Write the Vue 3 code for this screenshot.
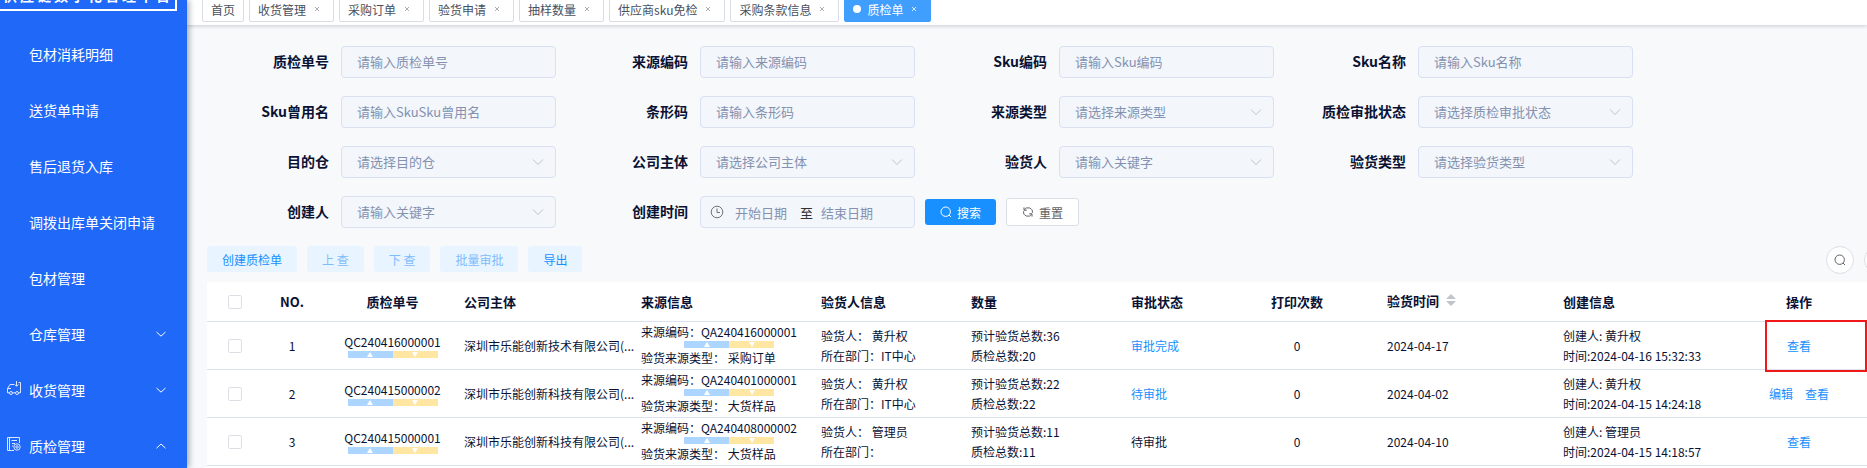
<script setup>
const menu = [
  { text: '包材消耗明细' },
  { text: '送货单申请' },
  { text: '售后退货入库' },
  { text: '调拨出库单关闭申请' },
  { text: '包材管理' },
  { text: '仓库管理', arrow: 'down' },
  { text: '收货管理', arrow: 'down', icon: 'truck' },
  { text: '质检管理', arrow: 'up', icon: 'doc' }
]

const tabs = [
  { text: '首页', fixed: true },
  { text: '收货管理' },
  { text: '采购订单' },
  { text: '验货申请' },
  { text: '抽样数量' },
  { text: '供应商sku免检' },
  { text: '采购条款信息' },
  { text: '质检单', active: true }
]

const fields = [
  { id: 'qcNo', label: '质检单号', hint: '请输入质检单号' },
  { id: 'srcNo', label: '来源编码', hint: '请输入来源编码' },
  { id: 'sku', label: 'Sku编码', hint: '请输入Sku编码' },
  { id: 'skuName', label: 'Sku名称', hint: '请输入Sku名称' },
  { id: 'skuAlias', label: 'Sku曾用名', hint: '请输入SkuSku曾用名' },
  { id: 'barcode', label: '条形码', hint: '请输入条形码' },
  { id: 'srcType', label: '来源类型', hint: '请选择来源类型', select: true },
  { id: 'auditState', label: '质检审批状态', hint: '请选择质检审批状态', select: true },
  { id: 'warehouse', label: '目的仓', hint: '请选择目的仓', select: true },
  { id: 'company', label: '公司主体', hint: '请选择公司主体', select: true },
  { id: 'inspector', label: '验货人', hint: '请输入关键字', select: true },
  { id: 'inspectType', label: '验货类型', hint: '请选择验货类型', select: true },
  { id: 'creator', label: '创建人', hint: '请输入关键字', select: true }
]

const actions = [
  { text: '创建质检单' },
  { text: '上 查', disabled: true },
  { text: '下 查', disabled: true },
  { text: '批量审批', disabled: true },
  { text: '导出' }
]

const rows = [
  {
    no: 1, qc: 'QC240416000001', company: '深圳市乐能创新技术有限公司(...',
    src: 'QA240416000001', srcType: '采购订单', person: '黄升权', dept: 'IT中心',
    plan: 36, total: 20, state: '审批完成', link: true, prints: 0, date: '2024-04-17',
    creator: '黄升权', time: '2024-04-16 15:32:33', ops: ['查看'], marked: true
  },
  {
    no: 2, qc: 'QC240415000002', company: '深圳市乐能创新科技有限公司(...',
    src: 'QA240401000001', srcType: '大货样品', person: '黄升权', dept: 'IT中心',
    plan: 22, total: 22, state: '待审批', link: true, prints: 0, date: '2024-04-02',
    creator: '黄升权', time: '2024-04-15 14:24:18', ops: ['编辑', '查看']
  },
  {
    no: 3, qc: 'QC240415000001', company: '深圳市乐能创新科技有限公司(...',
    src: 'QA240408000002', srcType: '大货样品', person: '管理员', dept: '',
    plan: 11, total: 11, state: '待审批', link: false, prints: 0, date: '2024-04-10',
    creator: '管理员', time: '2024-04-15 14:18:57', ops: ['查看']
  }
]
</script>

<template>
  <div class="page">
    <aside class="side">
      <div class="brand"><div class="brand-box">供应链数字化管理平台</div></div>
      <nav>
        <a v-for="m in menu" :key="m.text" href="#" class="item">
          <span class="item-icon">
            <svg v-if="m.icon === 'truck'" width="16" height="16" viewBox="0 0 16 16">
              <path d="M3.4 12.8H1.5V8.5L4 4.5H8M14.5 5V12.8H12.6M6.6 12.8H9.4M1.5 8.5H5M10.5 1V6M8.6 4.4L10.5 6.3L12.4 4.4M12.5 2.5H14.5V5" />
              <circle cx="5" cy="13" r="1.5" /><circle cx="11" cy="13" r="1.5" />
            </svg>
            <svg v-else-if="m.icon === 'doc'" width="16" height="16" viewBox="0 0 16 16">
              <path d="M8 14.5H1.5V1.5H13.5V7M3.5 1.5V14.5M5.5 4.5H11M6 7.5H9M6 10H7" />
              <circle cx="11" cy="11" r="3.2" /><circle cx="11" cy="11" r="1.2" />
            </svg>
          </span>
          <span class="item-text">{{ m.text }}</span>
          <svg v-if="m.arrow" class="item-arrow" width="12" height="12" viewBox="0 0 12 12">
            <path :d="m.arrow === 'down' ? 'M1.5 4L6 8.2L10.5 4' : 'M1.5 8.2L6 4L10.5 8.2'" />
          </svg>
        </a>
      </nav>
    </aside>

    <main class="main">
      <div class="tabs">
        <a v-for="t in tabs" :key="t.text" href="#" class="tab" :class="{ active: t.active }">
          <i v-if="t.active" class="dot"></i>
          <span>{{ t.text }}</span>
          <svg v-if="!t.fixed" class="close" width="12" height="12" viewBox="0 0 12 12">
            <path d="M4 4L8 8M8 4L4 8" />
          </svg>
        </a>
      </div>

      <form class="filters" @submit.prevent>
        <div v-for="f in fields" :key="f.id" class="field">
          <label :for="f.id">{{ f.label }}</label>
          <div class="control">
            <template v-if="f.select">
              <select :id="f.id"><option>{{ f.hint }}</option></select>
              <svg class="caret" width="12" height="12" viewBox="0 0 12 12"><path d="M1 3.5L6 8.5L11 3.5" /></svg>
            </template>
            <input v-else :id="f.id" type="text" :placeholder="f.hint" />
          </div>
        </div>
        <div class="field">
          <label for="dateFrom">创建时间</label>
          <div class="control range">
            <svg class="clock" width="14" height="14" viewBox="0 0 14 14">
              <circle cx="7" cy="7" r="5.8" /><path d="M7 3.5V7.5H10" />
            </svg>
            <input id="dateFrom" type="text" placeholder="开始日期" />
            <span>至</span>
            <input id="dateTo" type="text" placeholder="结束日期" aria-label="结束日期" />
          </div>
        </div>
        <div class="submit">
          <button type="submit" class="btn primary">
            <svg width="12" height="12" viewBox="0 0 12 12"><circle cx="5.7" cy="5.7" r="4.7" /><path d="M9 9L11 11" /></svg>
            搜索
          </button>
          <button type="reset" class="btn plain">
            <svg width="12" height="12" viewBox="0 0 12 12">
              <path d="M2.2 4A4.4 4.4 0 0 1 10.4 6.8M9.8 8A4.4 4.4 0 0 1 1.6 5.2M2 1.4V4.2H4.8M10 10.6V7.8H7.2" />
            </svg>
            重置
          </button>
        </div>
      </form>

      <div class="toolbar">
        <button v-for="a in actions" :key="a.text" type="button" class="btn soft" :disabled="a.disabled">{{ a.text }}</button>
        <div class="rounds">
          <button type="button" class="round" aria-label="搜索">
            <svg width="12" height="12" viewBox="0 0 12 12"><circle cx="5.7" cy="5.7" r="4.7" /><path d="M9 9L11 11" /></svg>
          </button>
          <button type="button" class="round" aria-label="刷新"></button>
        </div>
      </div>

      <div class="table-wrap">
        <table>
          <colgroup>
            <col class="w-check" /><col class="w-no" /><col class="w-qc" /><col class="w-company" />
            <col class="w-src" /><col class="w-person" /><col class="w-count" /><col class="w-state" />
            <col class="w-print" /><col class="w-date" /><col class="w-create" /><col class="w-ops" />
          </colgroup>
          <thead>
            <tr>
              <th class="mid"><input type="checkbox" aria-label="全选" /></th>
              <th class="mid">NO.</th>
              <th class="mid">质检单号</th>
              <th>公司主体</th>
              <th>来源信息</th>
              <th>验货人信息</th>
              <th>数量</th>
              <th>审批状态</th>
              <th class="mid">打印次数</th>
              <th>
                <span class="sortable">验货时间
                  <svg width="10" height="12" viewBox="0 0 10 12"><path d="M0 5L5 0L10 5ZM0 7L5 12L10 7Z" /></svg>
                </span>
              </th>
              <th>创建信息</th>
              <th class="mid">操作</th>
            </tr>
          </thead>
          <tbody>
            <tr v-for="r in rows" :key="r.no">
              <td class="mid"><input type="checkbox" :aria-label="'选择 ' + r.no" /></td>
              <td class="mid">{{ r.no }}</td>
              <td class="mid">
                <div class="code">{{ r.qc }}</div>
                <div class="step"><i><b class="up"></b></i><i><b class="down"></b></i></div>
              </td>
              <td>{{ r.company }}</td>
              <td>
                <div class="code">来源编码：{{ r.src }}</div>
                <div class="step"><i><b class="up"></b></i><i><b class="down"></b></i></div>
                <div class="line">验货来源类型： {{ r.srcType }}</div>
              </td>
              <td>
                <div class="line">验货人： {{ r.person }}</div>
                <div class="line">所在部门：{{ r.dept }}</div>
              </td>
              <td>
                <div class="line">预计验货总数:{{ r.plan }}</div>
                <div class="line">质检总数:{{ r.total }}</div>
              </td>
              <td><a v-if="r.link" href="#">{{ r.state }}</a><span v-else>{{ r.state }}</span></td>
              <td class="mid">{{ r.prints }}</td>
              <td>{{ r.date }}</td>
              <td>
                <div class="line">创建人: {{ r.creator }}</div>
                <div class="line">时间:{{ r.time }}</div>
              </td>
              <td class="mid ops">
                <div class="links"><a v-for="o in r.ops" :key="o" href="#">{{ o }}</a></div>
                <div v-if="r.marked" class="mark"></div>
              </td>
            </tr>
          </tbody>
        </table>
      </div>
    </main>
  </div>
</template>

<style>
body {
  margin: 0;
}
</style>

<style scoped>
.page {
  display: flex;
  height: 100vh;
  overflow: hidden;
  background: #f8f9fb;
  color: #0a1233;
  font-family: "Noto Sans CJK SC", "Noto Sans", sans-serif;
  font-size: 12px;
}
.page * {
  box-sizing: border-box;
}
a {
  color: #1890ff;
  text-decoration: none;
}
svg {
  fill: none;
  stroke: currentColor;
  flex: none;
}
button,
input,
select {
  font-family: inherit;
}

/* sidebar */
.side {
  flex: none;
  width: 187px;
  background: #1f68f8;
  box-shadow: 2px 0 6px rgba(0, 21, 41, 0.35);
  position: relative;
  z-index: 2;
}
.brand {
  display: flex;
  align-items: flex-end;
  height: 26px;
  padding-bottom: 15px;
  overflow: hidden;
}
.brand-box {
  flex: none;
  width: 177px;
  padding: 4px 0 4px 3px;
  border: 2px solid #fff;
  border-left: 0;
  color: #fff;
  font-size: 14px;
  font-weight: 700;
  letter-spacing: 3px;
  line-height: 20px;
  white-space: nowrap;
}
.item {
  display: flex;
  align-items: center;
  height: 56px;
  padding: 0 20px 0 6px;
  color: #fff;
  font-size: 14px;
}
.item-icon {
  width: 23px;
  height: 20px;
  opacity: 0.85;
}
.item-text {
  flex: 1;
  white-space: nowrap;
}

/* tabs */
.main {
  flex: 1;
  min-width: 0;
  display: flex;
  flex-direction: column;
}
.tabs {
  display: flex;
  align-items: flex-end;
  gap: 5px;
  height: 25px;
  flex: none;
  padding: 0 15px 3px;
  background: #fff;
  box-shadow: 0 1px 4px rgba(0, 21, 41, 0.2);
}
.tab {
  display: flex;
  align-items: center;
  flex: none;
  height: 26px;
  padding: 0 8px;
  border: 1px solid #d8dce5;
  border-radius: 2px;
  background: #fff;
  color: #495060;
  white-space: nowrap;
}
.close {
  margin: 0 2px 0 5px;
  color: #a9adb6;
}
.tab.active {
  background: #409eff;
  border-color: #409eff;
  color: #fff;
}
.tab.active .close {
  color: #d5e9ff;
}
.dot {
  width: 8px;
  height: 8px;
  margin-right: 6px;
  border-radius: 50%;
  background: #fff;
}

/* filters */
.filters {
  display: grid;
  grid-template-columns: repeat(4, 1fr);
  row-gap: 18px;
  padding: 21px 224px 18px 20px;
}
.field {
  display: flex;
  align-items: center;
  padding-right: 10px;
}
.field label {
  flex: none;
  width: 134px;
  padding: 0 12px 2px 0;
  text-align: right;
  font-size: 14px;
  font-weight: 700;
  line-height: 30px;
}
.control {
  flex: 1;
  min-width: 0;
  position: relative;
}
.control input,
.control select {
  display: block;
  width: 100%;
  height: 32px;
  padding: 0 15px 2px;
  border: 1px solid #d9e0f2;
  border-radius: 4px;
  outline: none;
  background: #f3f6fb;
  color: #8492b0;
  font-size: 13px;
  appearance: none;
}
.control input::placeholder {
  color: #8492b0;
  opacity: 1;
}
.caret {
  position: absolute;
  right: 12px;
  top: 10px;
  color: #c0c4cc;
  pointer-events: none;
}
.control.range {
  display: flex;
  align-items: center;
  height: 32px;
  padding: 0 9px;
  border: 1px solid #d9e0f2;
  border-radius: 4px;
  background: #f3f6fb;
  font-size: 13px;
  color: #303133;
}
.control.range input {
  width: 60px;
  height: 28px;
  padding: 0;
  border: 0;
  background: none;
}
.range span {
  margin: 0 8px 0 5px;
}
.clock {
  margin-right: 11px;
  color: #70757f;
}
.submit {
  display: flex;
  align-items: center;
  gap: 10px;
}
.btn {
  display: flex;
  align-items: center;
  gap: 5px;
  height: 26px;
  padding: 0 15px;
  border: 0;
  border-radius: 3px;
  font-size: 12px;
  white-space: nowrap;
}
.primary {
  background: #1890ff;
  color: #fff;
}
.plain {
  height: 28px;
  border: 1px solid #dcdfe6;
  background: #fff;
  color: #606266;
}

/* toolbar */
.toolbar {
  display: flex;
  gap: 10px;
  height: 36px;
  flex: none;
  margin: 0 -25px 0 20px;
}
.soft {
  background: #e8f4ff;
  color: #1890ff;
  white-space: pre;
}
.soft:disabled {
  color: #7fbcfb;
}
.rounds {
  display: flex;
  gap: 10px;
  margin-left: auto;
}
.round {
  display: flex;
  align-items: center;
  justify-content: center;
  width: 28px;
  height: 28px;
  padding: 0;
  border: 1px solid #dcdfe6;
  border-radius: 50%;
  background: #fff;
  color: #606266;
}

/* table */
.table-wrap {
  flex: 1;
  margin-left: 20px;
  background: #fff;
}
table {
  width: 100%;
  table-layout: fixed;
  border-collapse: separate;
  border-spacing: 0;
}
.w-check { width: 56px; }
.w-no { width: 58px; }
.w-qc { width: 143px; }
.w-company { width: 177px; }
.w-src { width: 180px; }
.w-person { width: 150px; }
.w-count { width: 160px; }
.w-state { width: 76px; }
.w-print { width: 180px; }
.w-date { width: 176px; }
.w-create { width: 168px; }
.w-ops { width: 136px; }
th,
td {
  padding: 0 4px 0 0;
  border-bottom: 1px solid #dbe1ee;
  text-align: left;
  white-space: nowrap;
}
th {
  height: 40px;
  font-size: 13px;
  font-weight: 700;
}
td {
  height: 48px;
}
th.mid,
td.mid {
  padding: 0;
  text-align: center;
}
th input,
td input {
  display: block;
  width: 14px;
  height: 14px;
  margin: 0 auto;
  border: 1px solid #dcdfe6;
  border-radius: 2px;
  background: #fff;
  appearance: none;
}
.sortable {
  display: flex;
  align-items: center;
  gap: 7px;
  padding-bottom: 3px;
}
.sortable svg {
  fill: #c0c4cc;
  stroke: none;
}
.code {
  line-height: 18px;
}
.line {
  line-height: 20px;
}
.step {
  display: flex;
  width: 90px;
  height: 7px;
  margin: 0 auto;
}
.step i {
  display: flex;
  flex: 1;
  align-items: center;
  justify-content: center;
  background: #acd6ff;
}
.step i + i {
  background: #ffe7a3;
}
.up,
.down {
  border: 3px solid transparent;
}
.up {
  border-top: 0;
  border-bottom: 5px solid #fff;
}
.down {
  border-bottom: 0;
  border-top: 5px solid #fff;
}
.ops {
  position: relative;
}
.links {
  display: flex;
  justify-content: center;
  gap: 12px;
}
.mark {
  position: absolute;
  inset: -2px 0 -3px 34px;
  border: 2px solid #f01818;
  pointer-events: none;
}
</style>
